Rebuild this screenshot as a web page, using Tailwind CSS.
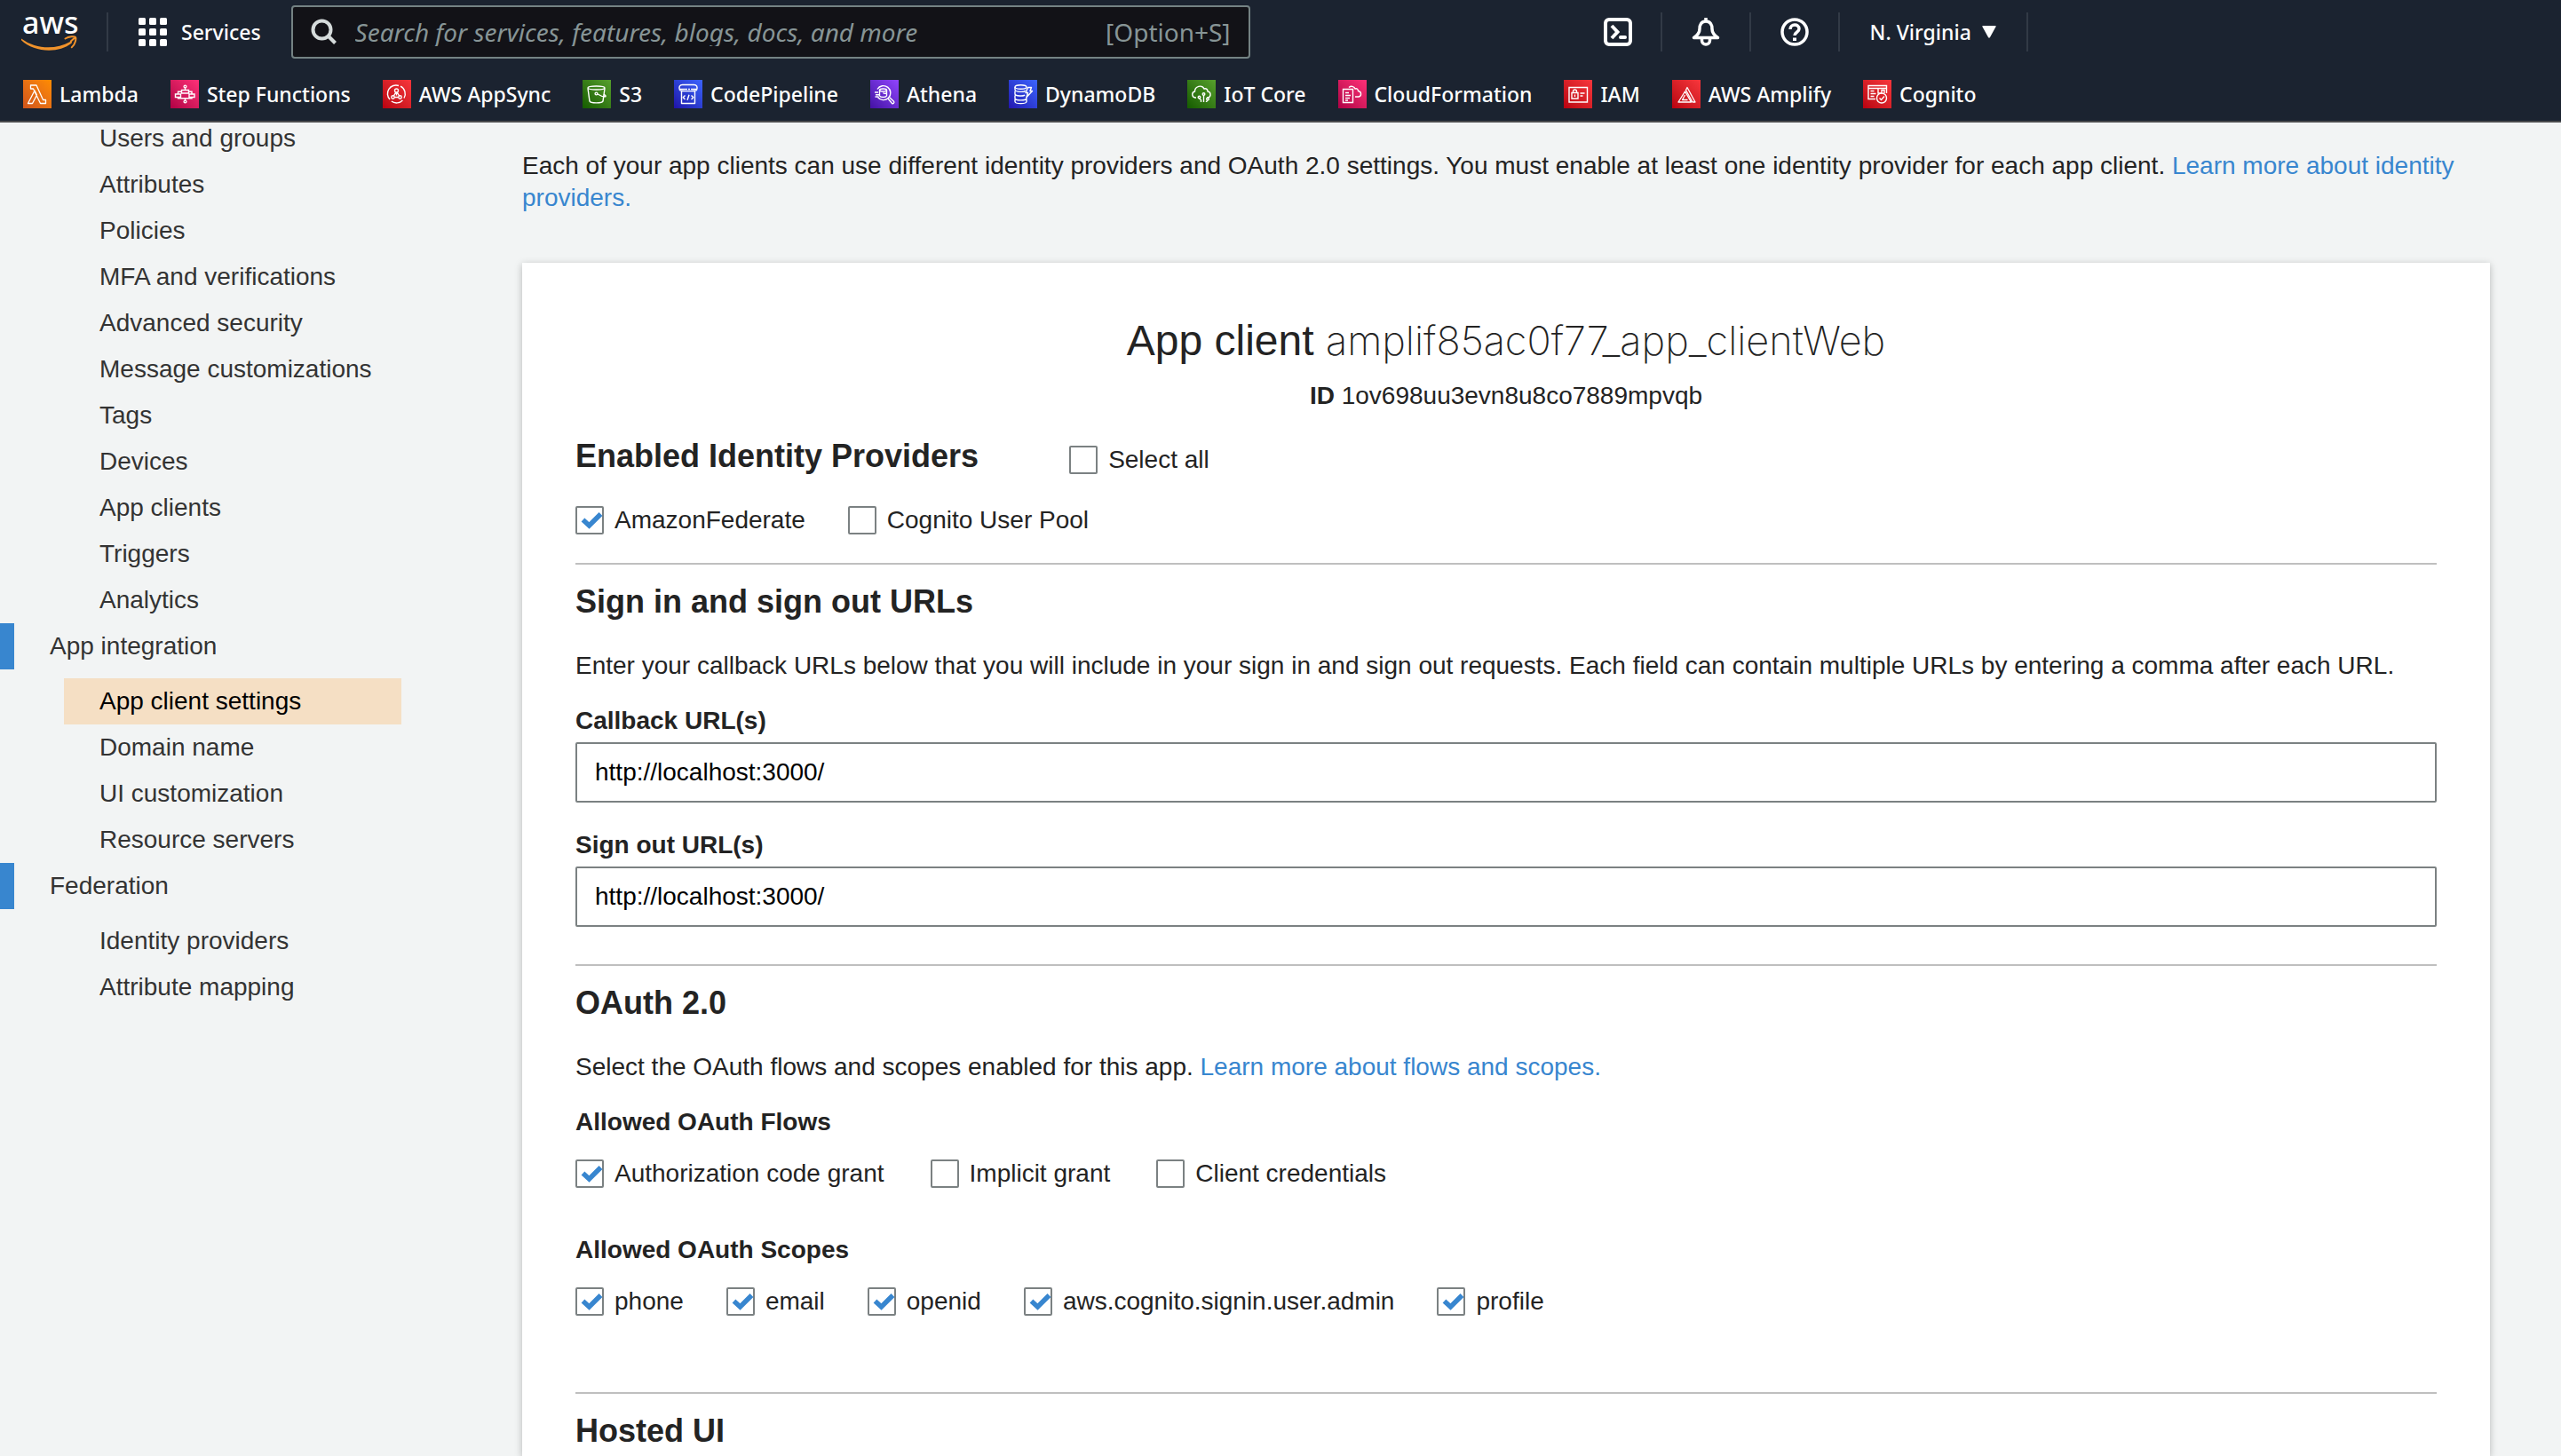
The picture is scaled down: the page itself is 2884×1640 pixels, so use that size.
<!DOCTYPE html>
<html lang="en">
<head>
<meta charset="utf-8">
<meta name="viewport" content="width=device-width, initial-scale=1">
<title>App client settings</title>
<script src="https://cdn.jsdelivr.net/npm/@tailwindcss/browser@4"></script>
</head>
<body class="flex min-h-screen flex-col bg-[#f2f4f4] font-['Liberation_Sans',Arial,sans-serif] text-[28px] leading-9 text-[#232323]">

<header class="sticky top-0 z-10 border-b-2 border-[#4a4b4d] bg-[#1b2330] font-['Noto_Sans',sans-serif] text-[23px] font-medium leading-8 text-white">
  <div class="flex h-[72px] items-center">
    <a href="#" aria-label="AWS home" class="ml-6">
      <svg class="h-14 w-16" viewBox="0 0 64 56" fill="none">
        <text x="1" y="30" font-family="Noto Sans" font-size="34" font-weight="500" fill="#fff">aws</text>
        <path d="M0 35.500c17 12.500 39 12.500 55 3.500 1.500-.8 2.700.6 1.500 1.800C42 52.500 14 51 0 37.300c-1-1 0-2.300 0-1.800Z" fill="#f0922b"/>
        <path d="M49.500 35.500c4-2.500 10.500-2.800 11.500-1.700 1.100 1.300-.3 8.600-4.200 11.500M60.800 34l-5 4.500" stroke="#f0922b" stroke-width="2" stroke-linecap="round"/>
      </svg>
    </a>
    <div class="ml-8 h-11 w-0.5 bg-[#323a46]"></div>
    <button class="ml-[34px] flex items-center gap-4">
      <svg class="size-8" viewBox="0 0 32 32" fill="#fff">
        <rect width="8" height="8" rx="1.500"/><rect x="12" width="8" height="8" rx="1.500"/><rect x="24" width="8" height="8" rx="1.500"/>
        <rect y="12" width="8" height="8" rx="1.500"/><rect x="12" y="12" width="8" height="8" rx="1.500"/><rect x="24" y="12" width="8" height="8" rx="1.500"/>
        <rect y="24" width="8" height="8" rx="1.500"/><rect x="12" y="24" width="8" height="8" rx="1.500"/><rect x="24" y="24" width="8" height="8" rx="1.500"/>
      </svg>
      Services
    </button>
    <div class="ml-[34px] flex h-[60px] w-[1080px] items-center rounded-sm border-2 border-[#748283] bg-[#121217] px-5 text-[28px] font-normal text-[#879596]">
      <svg class="mr-5 size-[30px] shrink-0" viewBox="0 0 30 30" fill="none" stroke="#d5dbdb" stroke-width="4"><circle cx="12.500" cy="12.500" r="10"/><path d="m19.500 19.500 8 8"/></svg>
      <input type="text" aria-label="Search" placeholder="Search for services, features, blogs, docs, and more" class="min-w-0 flex-1 bg-transparent italic outline-none placeholder:text-[#879596]">
      <span>[Option+S]</span>
    </div>
    <div class="ml-[398px] flex items-center">
      <button aria-label="CloudShell" class="mr-8">
        <svg class="size-8" viewBox="0 0 32 32" fill="none" stroke="#fff" stroke-width="4"><rect x="2" y="2" width="28" height="28" rx="4"/><path d="m9 9 6.500 7L9 23"/><path d="M19 22h5" stroke-linecap="round"/></svg>
      </button>
      <div class="h-11 w-0.5 bg-[#323a46]"></div>
      <button aria-label="Notifications" class="mx-[33px]">
        <svg class="size-8" viewBox="0 0 32 32" fill="none" stroke="#fff" stroke-width="3.500" stroke-linejoin="round"><path d="M16 4c-5 0-7 4-7 8.500 0 4-2 7-6.500 10h27C25 19.500 23 16.500 23 12.500 23 8 21 4 16 4Z"/><path d="M16 0v4M11.500 23v2.500a4.500 4.500 0 0 0 9 0V23"/></svg>
      </button>
      <div class="h-11 w-0.5 bg-[#323a46]"></div>
      <button aria-label="Help" class="mx-[33px]">
        <svg class="size-8" viewBox="0 0 32 32" fill="none" stroke="#fff" stroke-width="3.500"><circle cx="16" cy="16" r="14"/><path d="M11 13c0-6.500 10-6.500 10-.5 0 4-5 3.500-5 7.500"/><path d="M16 22.500V26" stroke-width="4"/></svg>
      </button>
      <div class="h-11 w-0.5 bg-[#323a46]"></div>
      <button class="mx-[34px] flex items-center gap-3">
        N. Virginia
        <svg class="h-3.5 w-4" viewBox="0 0 16 14" fill="#fff"><path d="M1 0h14q1.200 0 .6 1L9 13q-1 1.500-2 0L.4 1Q-.2 0 1 0Z"/></svg>
      </button>
      <div class="h-11 w-0.5 bg-[#323a46]"></div>
    </div>
  </div>

  <nav aria-label="Favorites" class="flex h-16 items-center gap-9 pt-1 pl-[26px]">
    <a href="#" class="flex items-center gap-[9px]">
      <svg class="size-8 bg-linear-to-tr from-[#d0541a] to-[#ff8c00]" viewBox="0 0 32 32" fill="none" stroke="#fff" stroke-width="1.300" stroke-linejoin="round"><path d="M5.500 26.500h5l5-9.500-2.500-5-7.500 14.500ZM8.500 6v4h3l8 16.500h6v-4h-3L15 6H8.500Z"/></svg>
      Lambda</a>
    <a href="#" class="flex items-center gap-[9px]">
      <svg class="size-8 bg-linear-to-tr from-[#b00045] to-[#ff3078]" viewBox="0 0 32 32" fill="none" stroke="#fff" stroke-width="1.400"><circle cx="16.500" cy="7.500" r="1.400"/><circle cx="16.500" cy="24.500" r="1.400"/><path d="M16.500 9v2.500M16.500 20.500V23M12.500 11.500h8v3.500h-8zM5.500 16h6v3.500h-6zM21 16h6v3.500h-6zM12.500 13.200H8.500V16M20.500 13.200H24V16M8.500 19.500v1.300H24v-1.300"/></svg>
      Step Functions</a>
    <a href="#" class="flex items-center gap-[9px]">
      <svg class="size-8 bg-linear-to-tr from-[#b8000f] to-[#f8363c]" viewBox="0 0 32 32" fill="none" stroke="#fff" stroke-width="1.400"><path d="M18 6.500A9.500 9.500 0 0 0 8 22M9.800 24a9.500 9.500 0 0 0 12.600-1M20 7.200A9.500 9.500 0 0 1 24 20.500"/><circle cx="15.500" cy="12" r="2"/><circle cx="11.500" cy="19.500" r="1.700"/><circle cx="19.500" cy="19.500" r="1.700"/><path d="m14.700 14-2.300 4M16.300 14l2.300 4M13.200 19.500h4.600M15.500 14v3.500"/></svg>
      AWS AppSync</a>
    <a href="#" class="flex items-center gap-[9px]">
      <svg class="size-8 bg-linear-to-tr from-[#145c00] to-[#57a02c]" viewBox="0 0 32 32" fill="none" stroke="#fff" stroke-width="1.400"><ellipse cx="15.500" cy="9" rx="9.500" ry="2"/><path d="M6 9.500 8 24c.8 2.500 14.200 2.500 15 0l2-14.500"/><circle cx="15.500" cy="15.500" r="1.400"/><path d="M17 16c4 2.500 7 3 9 2.700.6-.9-.7-1.600-2.200-2.200"/></svg>
      S3</a>
    <a href="#" class="flex items-center gap-[9px]">
      <svg class="size-8 bg-linear-to-tr from-[#2010a8] to-[#3c64ff]" viewBox="0 0 32 32" fill="none" stroke="#fff" stroke-width="1.400" stroke-linejoin="round"><path d="M6.500 11.500c-1.500-3.500 0-6 3-6h13c3 0 4.500 2.500 3 6-.7 1.500-18.300 1.500-19 0ZM6 10.500h9M19 10.500h7M16 10.500h2M8.500 12.500v14h15v-14"/><path d="m12.500 17.500-2.300 2.300 2.300 2.300M19.500 17.500l2.300 2.300-2.300 2.300M17 16.800l-2 6"/></svg>
      CodePipeline</a>
    <a href="#" class="flex items-center gap-[9px]">
      <svg class="size-8 bg-linear-to-tr from-[#4410a4] to-[#9244ff]" viewBox="0 0 32 32" fill="none" stroke="#fff" stroke-width="1.400"><path d="M8 10.500a8 8 0 1 1 .5 9"/><path d="m20 21 4.500 5.500c1.500.7 3-1 2-2.300L21.500 19.500M5 14h4M6 16.700h4M5.500 19h4"/><ellipse cx="14.500" cy="11.500" rx="4" ry="1.500"/><path d="M10.500 11.500V18c1 2 7 2 8 0v-6.500M14.500 14.500c1 1.200 3 1 4 0"/></svg>
      Athena</a>
    <a href="#" class="flex items-center gap-[9px]">
      <svg class="size-8 bg-linear-to-tr from-[#2414b0] to-[#3c64ff]" viewBox="0 0 32 32" fill="none" stroke="#fff" stroke-width="1.400" stroke-linejoin="round"><ellipse cx="13.500" cy="8" rx="6.500" ry="2.300"/><path d="M7 8v3c.5 3 11 3 11.500 1M7 12.500v3.500c.5 2.500 10 2.500 11 1M7 17.500V21c.5 2.500 12.500 2.500 13 0v-1.500M7 22v2.500c.5 2.800 12.500 2.800 13 0V22"/><path d="M21.500 8.500h4l-1.500 4h2.500L20 19.500l1.500-5H19l2.500-6Z"/></svg>
      DynamoDB</a>
    <a href="#" class="flex items-center gap-[9px]">
      <svg class="size-8 bg-linear-to-tr from-[#145c00] to-[#57a02c]" viewBox="0 0 32 32" fill="none" stroke="#fff" stroke-width="1.400"><path d="M10 20H9c-4-.5-4.500-6-.5-7 0-6 8-8 10.500-3 2.500-1 4 1 4 3 4 .5 4 6 .5 7H22"/><circle cx="18.500" cy="16" r="1.300"/><circle cx="13.500" cy="19.500" r="1.300"/><circle cx="23" cy="21.500" r="1.300"/><path d="M18.500 17.500V25M13.500 21l2 1.500V25M23 23l-1.500 1.500V25"/></svg>
      IoT Core</a>
    <a href="#" class="flex items-center gap-[9px]">
      <svg class="size-8 bg-linear-to-tr from-[#b00045] to-[#ff3078]" viewBox="0 0 32 32" fill="none" stroke="#fff" stroke-width="1.400"><path d="M5.500 10.500h11v15h-11zM8 14.500h4M8 17.500h6M8 20.500h5M8 23h3M12 8.500c2.500-2 5.500-1.500 7 1.500 2-.7 3.500.5 3.500 2.500 4 .5 4 6 .5 6.500h-4"/></svg>
      CloudFormation</a>
    <a href="#" class="flex items-center gap-[9px]">
      <svg class="size-8 bg-linear-to-tr from-[#b8000f] to-[#f8363c]" viewBox="0 0 32 32" fill="none" stroke="#fff" stroke-width="1.400"><path d="M6 8.500h20.500v16.500H6zM9 14.500h7V21H9zM10.500 14.500V13c0-2.700 4-2.700 4 0v1.500M12.500 16.500V19M18.500 15h5M18.500 18h3"/></svg>
      IAM</a>
    <a href="#" class="flex items-center gap-[9px]">
      <svg class="size-8 bg-linear-to-tr from-[#b8000f] to-[#f8363c]" viewBox="0 0 32 32" fill="none" stroke="#fff" stroke-width="1.300" stroke-linejoin="round"><path d="M17 8.500 26 25h-3L15.500 11.500 17 8.500ZM14.500 13 21.500 25H7l7.500-12ZM14.500 17l-3 5.500h6"/></svg>
      AWS Amplify</a>
    <a href="#" class="flex items-center gap-[9px]">
      <svg class="size-8 bg-linear-to-tr from-[#b8000f] to-[#f8363c]" viewBox="0 0 32 32" fill="none" stroke="#fff" stroke-width="1.400"><path d="M14 21.500H6v-15h20.500V15M6 9.500h20.500M8.500 12.500h4M8.500 15.500h6M8.500 18.500h4M17 10v5h4v-3.500h3V15"/><circle cx="21" cy="20.500" r="5.500"/><path d="m18.500 20.500 2 2 3.500-4"/></svg>
      Cognito</a>
  </nav>
</header>

<div class="flex flex-1">
  <nav aria-label="User pool" class="-mt-2 w-[588px] shrink-0 leading-[52px] text-[#333]">
    <ul class="ml-[72px] w-[380px]">
      <li><a href="#" class="block pl-10">Users and groups</a></li>
      <li><a href="#" class="block pl-10">Attributes</a></li>
      <li><a href="#" class="block pl-10">Policies</a></li>
      <li><a href="#" class="block pl-10">MFA and verifications</a></li>
      <li><a href="#" class="block pl-10">Advanced security</a></li>
      <li><a href="#" class="block pl-10">Message customizations</a></li>
      <li><a href="#" class="block pl-10">Tags</a></li>
      <li><a href="#" class="block pl-10">Devices</a></li>
      <li><a href="#" class="block pl-10">App clients</a></li>
      <li><a href="#" class="block pl-10">Triggers</a></li>
      <li><a href="#" class="block pl-10">Analytics</a></li>
    </ul>
    <a href="#" class="mb-2.5 block border-l-16 border-[#3886cf] pl-10">App integration</a>
    <ul class="ml-[72px] w-[380px]">
      <li><a href="#" aria-current="page" class="block bg-[#f5dfc4] pl-10 text-black">App client settings</a></li>
      <li><a href="#" class="block pl-10">Domain name</a></li>
      <li><a href="#" class="block pl-10">UI customization</a></li>
      <li><a href="#" class="block pl-10">Resource servers</a></li>
    </ul>
    <a href="#" class="mb-2.5 block border-l-16 border-[#3886cf] pl-10">Federation</a>
    <ul class="ml-[72px] w-[380px]">
      <li><a href="#" class="block pl-10">Identity providers</a></li>
      <li><a href="#" class="block pl-10">Attribute mapping</a></li>
    </ul>
  </nav>

  <main class="flex min-w-0 flex-1 flex-col pt-[31px] pr-20">
    <p>Each of your app clients can use different identity providers and OAuth 2.0 settings. You must enable at least one identity provider for each app client. <a href="#" class="text-[#3886cf]">Learn more about identity providers.</a></p>

    <div class="mt-[55px] flex-1 bg-white px-[60px] pt-[60px] shadow-[0_2px_8px_rgba(0,0,0,0.25)]">
      <h1 class="text-center text-[48px] leading-14">App client <span class="font-['Inter',sans-serif] text-[45px] font-extralight">amplif85ac0f77_app_clientWeb</span></h1>
      <p class="mt-4 text-center"><b>ID</b> 1ov698uu3evn8u8co7889mpvqb</p>

      <section class="mt-[30px] pb-[30px]">
        <div class="flex items-start gap-[102px]">
          <h2 class="text-[36px] font-bold leading-10">Enabled Identity Providers</h2>
          <label class="mt-1.5 flex items-center gap-3"><input type="checkbox" class="size-8 appearance-none rounded-xs border-2 border-[#7b8182] bg-white">Select all</label>
        </div>
        <div class="mt-8 flex gap-12">
          <label class="flex items-center gap-3">
            <span class="grid"><input type="checkbox" checked class="peer size-8 appearance-none rounded-xs border-2 border-[#7b8182] bg-white [grid-area:1/1]"><svg class="pointer-events-none invisible size-8 peer-checked:visible [grid-area:1/1]" viewBox="0 0 32 32" fill="none" stroke="#3886cf" stroke-width="5.500"><path d="m8.500 15.500 7 6.500L28.500 9"/></svg></span>
            AmazonFederate</label>
          <label class="flex items-center gap-3"><input type="checkbox" class="size-8 appearance-none rounded-xs border-2 border-[#7b8182] bg-white">Cognito User Pool</label>
        </div>
      </section>

      <section class="border-t-2 border-[#bfbfbf] pt-[22px] pb-[42px]">
        <h2 class="text-[36px] font-bold leading-10">Sign in and sign out URLs</h2>
        <p class="mt-[34px]">Enter your callback URLs below that you will include in your sign in and sign out requests. Each field can contain multiple URLs by entering a comma after each URL.</p>
        <label for="callback" class="mt-[26px] block font-bold">Callback URL(s)</label>
        <input id="callback" type="text" value="http://localhost:3000/" class="mt-1.5 block h-[68px] w-full rounded-xs border-2 border-[#7b8182] bg-white px-5 text-black">
        <label for="signout" class="mt-[30px] block font-bold">Sign out URL(s)</label>
        <input id="signout" type="text" value="http://localhost:3000/" class="mt-1.5 block h-[68px] w-full rounded-xs border-2 border-[#7b8182] bg-white px-5 text-black">
      </section>

      <section class="border-t-2 border-[#bfbfbf] pt-[22px] pb-[84px]">
        <h2 class="text-[36px] font-bold leading-10">OAuth 2.0</h2>
        <p class="mt-[34px]">Select the OAuth flows and scopes enabled for this app. <a href="#" class="text-[#3886cf]">Learn more about flows and scopes.</a></p>
        <h3 class="mt-[26px] font-bold">Allowed OAuth Flows</h3>
        <div class="mt-[22px] flex gap-[52px]">
          <label class="flex items-center gap-3">
            <span class="grid"><input type="checkbox" checked class="peer size-8 appearance-none rounded-xs border-2 border-[#7b8182] bg-white [grid-area:1/1]"><svg class="pointer-events-none invisible size-8 peer-checked:visible [grid-area:1/1]" viewBox="0 0 32 32" fill="none" stroke="#3886cf" stroke-width="5.500"><path d="m8.500 15.500 7 6.500L28.500 9"/></svg></span>
            Authorization code grant</label>
          <label class="flex items-center gap-3"><input type="checkbox" class="size-8 appearance-none rounded-xs border-2 border-[#7b8182] bg-white">Implicit grant</label>
          <label class="flex items-center gap-3"><input type="checkbox" class="size-8 appearance-none rounded-xs border-2 border-[#7b8182] bg-white">Client credentials</label>
        </div>
        <h3 class="mt-[50px] font-bold">Allowed OAuth Scopes</h3>
        <div class="mt-[22px] flex gap-12">
          <label class="flex items-center gap-3">
            <span class="grid"><input type="checkbox" checked class="peer size-8 appearance-none rounded-xs border-2 border-[#7b8182] bg-white [grid-area:1/1]"><svg class="pointer-events-none invisible size-8 peer-checked:visible [grid-area:1/1]" viewBox="0 0 32 32" fill="none" stroke="#3886cf" stroke-width="5.500"><path d="m8.500 15.500 7 6.500L28.500 9"/></svg></span>
            phone</label>
          <label class="flex items-center gap-3">
            <span class="grid"><input type="checkbox" checked class="peer size-8 appearance-none rounded-xs border-2 border-[#7b8182] bg-white [grid-area:1/1]"><svg class="pointer-events-none invisible size-8 peer-checked:visible [grid-area:1/1]" viewBox="0 0 32 32" fill="none" stroke="#3886cf" stroke-width="5.500"><path d="m8.500 15.500 7 6.500L28.500 9"/></svg></span>
            email</label>
          <label class="flex items-center gap-3">
            <span class="grid"><input type="checkbox" checked class="peer size-8 appearance-none rounded-xs border-2 border-[#7b8182] bg-white [grid-area:1/1]"><svg class="pointer-events-none invisible size-8 peer-checked:visible [grid-area:1/1]" viewBox="0 0 32 32" fill="none" stroke="#3886cf" stroke-width="5.500"><path d="m8.500 15.500 7 6.500L28.500 9"/></svg></span>
            openid</label>
          <label class="flex items-center gap-3">
            <span class="grid"><input type="checkbox" checked class="peer size-8 appearance-none rounded-xs border-2 border-[#7b8182] bg-white [grid-area:1/1]"><svg class="pointer-events-none invisible size-8 peer-checked:visible [grid-area:1/1]" viewBox="0 0 32 32" fill="none" stroke="#3886cf" stroke-width="5.500"><path d="m8.500 15.500 7 6.500L28.500 9"/></svg></span>
            aws.cognito.signin.user.admin</label>
          <label class="flex items-center gap-3">
            <span class="grid"><input type="checkbox" checked class="peer size-8 appearance-none rounded-xs border-2 border-[#7b8182] bg-white [grid-area:1/1]"><svg class="pointer-events-none invisible size-8 peer-checked:visible [grid-area:1/1]" viewBox="0 0 32 32" fill="none" stroke="#3886cf" stroke-width="5.500"><path d="m8.500 15.500 7 6.500L28.500 9"/></svg></span>
            profile</label>
        </div>
      </section>

      <section class="border-t-2 border-[#bfbfbf] pt-[22px]">
        <h2 class="text-[36px] font-bold leading-10">Hosted UI</h2>
      </section>
    </div>
  </main>
</div>
</body>
</html>
